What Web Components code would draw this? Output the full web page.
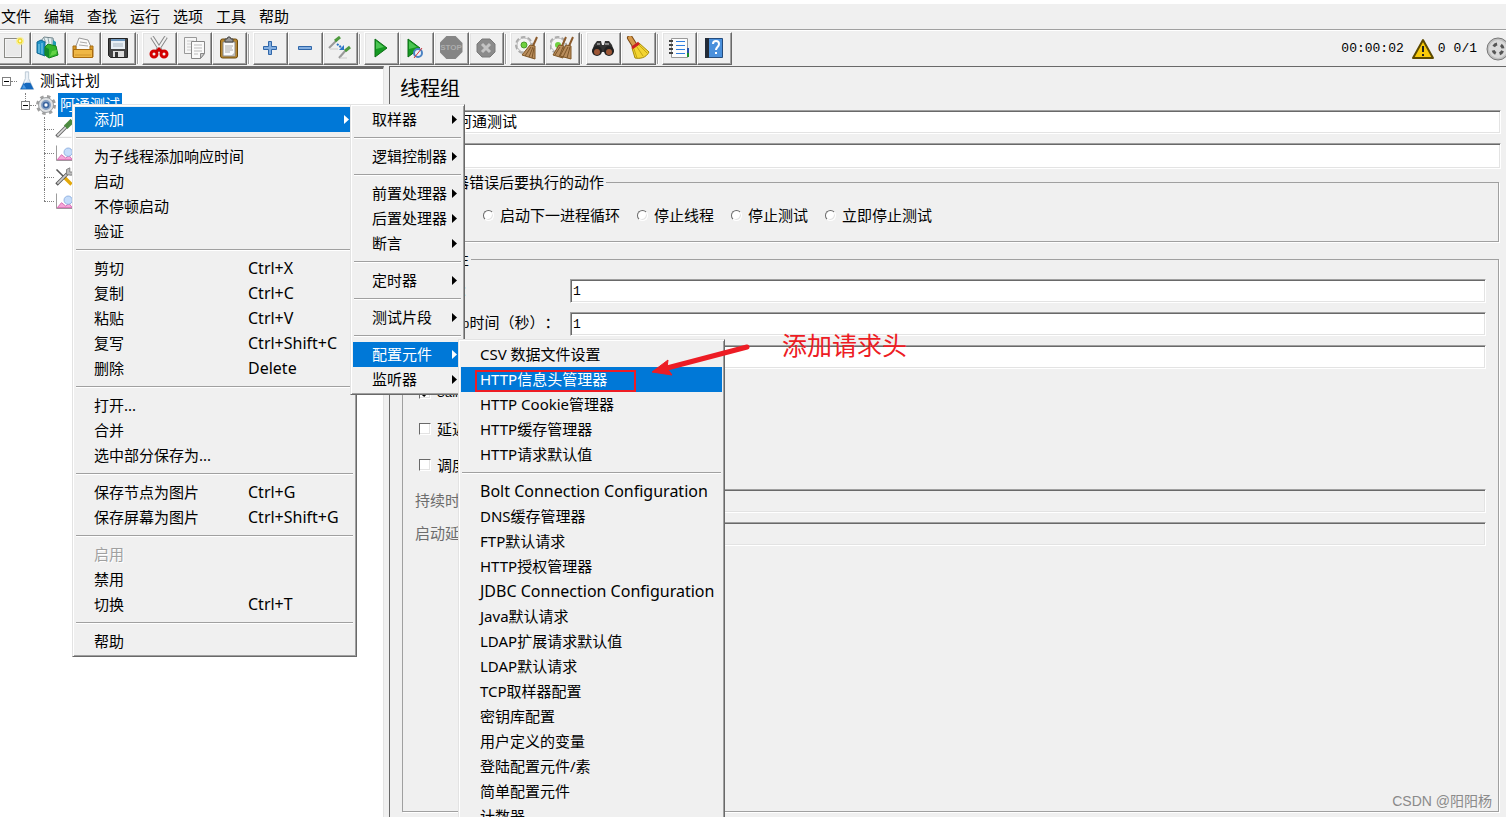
<!DOCTYPE html>
<html lang="zh-CN">
<head>
<meta charset="utf-8">
<title>线程组</title>
<style>
  html, body { height: 100%; }
  body {
    margin: 0; overflow: hidden; background: #f0f0f0; color: #000;
    font: 15px/20px "Noto Sans", "Noto Sans CJK SC", sans-serif;
    text-spacing-trim: space-all;
    --face: #f0f0f0; --light: #e3e3e3; --shade: #a0a0a0; --dark: #696969; --select: #0078d7;
    --form-font: "Noto Sans CJK SC", sans-serif; --mono: "Liberation Mono", monospace;
  }
</style>
</head>
<body>
<jm-app></jm-app>
<script>
const ICONS = {
  blank: `<rect x="3.500" y="2.500" width="17" height="19" fill="#f4f4f4" stroke="#8a8a86"/><rect x="5" y="4" width="14" height="16" fill="#e9e9e9"/><circle cx="19" cy="5" r="4" fill="#fbf08a" opacity=".8"/><circle cx="19" cy="5" r="2" fill="#fff6b8" stroke="#edd400"/>`,
  books: `<path d="M5 5l3-4 9 1 1 7-10 2z" fill="#e4eef0" stroke="#70848a"/><path d="M8 2l2 5M12 2l1 5M16 2l0 6" stroke="#8da3aa"/><path d="M1 6l4-2 4 2v14l-8-3z" fill="#1e93c7" stroke="#0f6591"/><path d="M3 8v9M6 7v11" stroke="#8fd2ee"/><path d="M17 4l3 2v8l-4 2z" fill="#1e9bb0"/><path d="M9 11l3-3 8 2 2 9-9 3-4-3z" fill="#35b52b" stroke="#16801b"/><path d="M9 11l4 2v9l-4-3z" fill="#128a2c"/><path d="M14 20l2-5 5-1-1 4z" fill="#62d446"/>`,
  open: `<path d="M5 10l3-8 9 2 3 7v5H5z" fill="#fafafa" stroke="#999"/><path d="M9 6l7 1M8 9l9 1" stroke="#aaa"/><path d="M2 10h3v5h14v-5h3v11H2z" fill="#d99b28" stroke="#a96c10"/><path d="M2.500 13.500h19v8h-19z" fill="#efb745" stroke="#a96c10"/><path d="M4 19h16" stroke="#d0942b"/>`,
  save: `<path d="M2.500 2.500h19v19h-17l-2-2z" fill="#444" stroke="#222"/><path d="M5 3h14v10H5z" fill="#e8eff5"/><path d="M5 3h14v2H5z" fill="#6d96bd"/><path d="M7 8h10M7 10h10" stroke="#a9b6c2"/><rect x="7" y="15" width="11" height="6" fill="#ddd"/><rect x="9" y="16" width="3" height="5" fill="#333"/>`,
  cut: `<path d="M5 1l9 14M19 1l-9 14" stroke="#888" stroke-width="4"/><path d="M5 1l9 14M19 1l-9 14" stroke="#f2f2f2" stroke-width="2"/><ellipse cx="7" cy="18" rx="3" ry="3" fill="none" stroke="#d40000" stroke-width="3"/><ellipse cx="17" cy="18" rx="3" ry="3" fill="none" stroke="#d40000" stroke-width="3"/><path d="M9 16l3-3 3 3" stroke="#c00" stroke-width="3" fill="none"/>`,
  copy: `<path d="M2.500 1.500h12v16h-12z" fill="#f6f6f6" stroke="#999"/><path d="M5 5h7M5 8h7M5 11h7M5 14h7" stroke="#ccc"/><path d="M9.500 5.500h13v12l-4 5h-9z" fill="#fafafa" stroke="#888"/><path d="M12 9h8M12 12h8M12 15h8M12 18h4" stroke="#bbb"/><path d="M22.500 17.500l-4 5v-5z" fill="#ccc" stroke="#888"/>`,
  paste: `<rect x="3.500" y="3" width="17" height="19" rx="2" fill="#b88730" stroke="#6d4a0c"/><path d="M6 6h12v14H6z" fill="#fafafa" stroke="#888"/><path d="M8 10h8M8 12h7M8 14h8M8 16h5" stroke="#aaa"/><path d="M8 6V3h2l1-2h2l1 2h2v3z" fill="#999" stroke="#444"/><path d="M14 20l4-4v4z" fill="#bbb"/>`,
  plus: `<path d="M10.500 5.500h3v5h5v3h-5v5h-3v-5h-5v-3h5z" fill="#83aee0" stroke="#2f66a9"/>`,
  minus: `<path d="M5.500 10.500h13v3h-13z" fill="#83aee0" stroke="#2f66a9"/>`,
  toggle: `<path d="M1 12L9 4" stroke="#999" stroke-width="2"/><path d="M7 5l5-4" stroke="#4d9a3d" stroke-width="3"/><path d="M11 22l7-8" stroke="#999" stroke-width="2"/><path d="M17 15l5-4" stroke="#4d9a3d" stroke-width="3"/><path d="M2 13h8M12 22h7" stroke="#ccc"/><path d="M9 8l5 4" stroke="#2c75c8" stroke-width="2" stroke-dasharray="2 1"/><path d="M16 9v5h-5z" fill="#2c75c8"/>`,
  play: `<path d="M6 3l12 9-12 9z" fill="#159a22" stroke="#0a6d14"/><path d="M7 5l8 6-8 2z" fill="#4bc552"/>`,
  playnow: `<path d="M4 3l12 9-12 9z" fill="#159a22" stroke="#0a6d14"/><path d="M5 5l8 6-8 2z" fill="#4bc552"/><circle cx="14" cy="17" r="4" fill="#e9f2fb" stroke="#4b83c3" stroke-width="2"/><path d="M10 22l8-10" stroke="#d33" stroke-width="1"/>`,
  shutdown: `<path d="M8 3h8l5 5v8l-5 5H8l-5-5V8z" fill="#8b8b8b" stroke="#7b7b7b"/><path d="M8 8l8 8M16 8l-8 8" stroke="#c4c4c4" stroke-width="3"/>`,
  clear: `<circle cx="9" cy="9" r="7" fill="none" stroke="#aaa" stroke-width="4" stroke-dasharray="4 2"/><circle cx="9" cy="9" r="7" fill="#f4f4f4" stroke="#bbb"/><circle cx="9" cy="9" r="3" fill="#6fd13f" stroke="#4c9c2c"/><path d="M22 1l-4 9" stroke="#8b5a2b" stroke-width="2"/><path d="M15 9l5 1v13L7 19z" fill="#b98d5c" stroke="#805726"/><path d="M16 11l-6 9M18 11l-4 10M19 12l-2 10" stroke="#7a5428"/>`,
  clearall: `<circle cx="8" cy="9" r="7" fill="none" stroke="#aaa" stroke-width="4" stroke-dasharray="4 2"/><circle cx="8" cy="9" r="7" fill="#f4f4f4" stroke="#bbb"/><circle cx="8" cy="9" r="3" fill="#6fd13f"/><path d="M16 1l-4 9M23 1l-4 9" stroke="#8b5a2b" stroke-width="2"/><path d="M9 9l5 1-1 12-10-3z" fill="#b98d5c" stroke="#805726"/><path d="M16 9l5 1 0 13-11-3z" fill="#b98d5c" stroke="#805726"/><path d="M10 11l-5 8M13 11l-4 10M18 11l-5 10M20 11l-3 11" stroke="#7a5428"/>`,
  find: `<path d="M3 9l3-4h4l1 4h2l1-4h4l3 4 2 7H1z" fill="#333"/><circle cx="6" cy="15" r="5" fill="#222"/><circle cx="18" cy="15" r="5" fill="#222"/><circle cx="6" cy="16" r="3" fill="#9d5635"/><circle cx="18" cy="16" r="3" fill="#9d5635"/><path d="M6 8h3M14 8h4" stroke="#888" stroke-width="2"/>`,
  sweep: `<path d="M4 2l5 8" stroke="#7a4a15" stroke-width="6" stroke-linecap="round"/><path d="M4 2l5 8" stroke="#d6994b" stroke-width="4" stroke-linecap="round"/><path d="M6 12l7-5 10 9c-3 6-9 7-14 6z" fill="#f3d532" stroke="#a58a0a"/><path d="M8 13l3 9M11 11l6 9M13 9l8 8" stroke="#c4a413"/><path d="M6 12l7-5" stroke="#c22" stroke-width="3"/>`,
  list: `<path d="M4.500 2.500h16v19h-16z" fill="#fcfcfc" stroke="#999"/><path d="M9 5.500h9M9 9.500h9M9 13.500h9M9 17.500h9" stroke="#2f7ee0" stroke-width="1"/><path d="M2 5h4M2 9h4M2 13h4M2 17h4" stroke="#444" stroke-width="2"/><path d="M21 12v5" stroke="#2a52a5" stroke-width="2"/><path d="M21 17v4" stroke="#198f2d" stroke-width="2"/>`,
  help: `<path d="M3.500 2.500h17v19h-17z" fill="#4a90dc" stroke="#254c7d"/><path d="M3 2h4v20H3z" fill="#222b38"/><path d="M11 8c0-4 6-4 6 0 0 3-3 3-3 6M14 16v2" fill="none" stroke="#fff" stroke-width="2"/>`,
  warn: `<path d="M12 3L22 21H2z" fill="#f8ca0a" stroke="#5d4a00" stroke-width="2" stroke-linejoin="round"/><path d="M12 9v6M12 17v2" stroke="#222" stroke-width="2"/>`,
  ball: `<circle cx="12" cy="12" r="11" fill="#c0c0c0" stroke="#777"/><circle cx="12" cy="12" r="9" fill="#dadada"/><circle cx="12" cy="12" r="5" fill="none" stroke="#555" stroke-width="3" stroke-dasharray="4 4" stroke-dashoffset="6"/>`,
  flask: `<path d="M10 1h4v8l6 13H4L10 9z" fill="#dfe9f3" stroke="#b7c4d0"/><path d="M8 14h8l4 8H4z" fill="#1568bd"/><path d="M8 16l-2 5h5z" fill="#4b9be6"/><path d="M12 2v8l-3 5" stroke="#fff" fill="none"/>`,
  gear: `<circle cx="12" cy="12" r="10" fill="none" stroke="#a0a0a0" stroke-width="4" stroke-dasharray="4 4"/><circle cx="12" cy="12" r="9" fill="#dfe1e3" stroke="#909497"/><circle cx="12" cy="12" r="5" fill="#3b66a0" stroke="#8aa3c4" stroke-width="2"/><circle cx="12" cy="12" r="2" fill="#fff"/>`,
  dropper: `<path d="M3 21L15 9" stroke="#666" stroke-width="4"/><path d="M4 20L15 9" stroke="#ddd" stroke-width="2"/><path d="M14 10l8-8" stroke="#4d8b41" stroke-width="6"/><path d="M3 22h18" stroke="#ccc"/>`,
  graph: `<path d="M3 3v18h19" fill="none" stroke="#888"/><path d="M4 20l5-6 5 4 4-3 4 5z" fill="#f6a4d8" stroke="#d05da8"/><circle cx="17" cy="11" r="5" fill="#c5dcfa" stroke="#87a9dc"/>`,
  tools: `<path d="M3 3l9 9" stroke="#555" stroke-width="2"/><path d="M12 12l9 9" stroke="#e3a80a" stroke-width="4"/><path d="M3 21L16 8" stroke="#555" stroke-width="4"/><path d="M4 20L16 8" stroke="#ccc" stroke-width="2"/><path d="M15 9V3l4-2v5h4l-2 4z" fill="#bbb" stroke="#777"/>`
};
const define = (name, html) => customElements.define(name, class extends HTMLElement {
  constructor() { super(); this.attachShadow({ mode: "open" }); }
  connectedCallback() {
    if (this.shadowRoot.childNodes.length) return;
    const t = document.createElement("template");
    t.innerHTML = typeof html === "function" ? html(this) : html;
    this.shadowRoot.append(t.content.cloneNode(true));
  }
});

define("jm-icon", el => `<style>:host{display:block;flex:none;width:24px;height:24px}svg{display:block;width:100%;height:100%}</style>
  <svg viewBox="0 0 24 24" fill="none" aria-hidden="true">${ICONS[el.getAttribute("name")]}</svg>`);

define("jm-tool", el => `<style>
  :host{display:block;flex:none}
  button{display:flex;align-items:center;justify-content:center;width:35px;height:33px;padding:0 1px 2px 0;margin:0;background:var(--face);
    border:1px solid;border-color:#fff var(--dark) var(--dark) #fff;box-shadow:inset -1px -1px var(--shade),inset 1px 1px var(--light)}
  .stop{display:flex;align-items:center;justify-content:center;width:23px;height:23px;background:#858585;color:#adadad;
    font:bold 8px "Liberation Sans",sans-serif;clip-path:polygon(30% 0,70% 0,100% 30%,100% 70%,70% 100%,30% 100%,0 70%,0 30%)}
  </style><button type="button" aria-label="${el.getAttribute("label")}">${el.getAttribute("name") === "stop" ? '<span class="stop">STOP</span>' : `<jm-icon name="${el.getAttribute("name")}"></jm-icon>`}</button>`);

define("jm-toolgroup", `<style>:host{display:flex;flex:none}:host(:not([first]))::before{content:"";width:1px;margin:2px 3px 1px 1px;border-left:1px solid var(--shade);background:#fff}</style><slot></slot>`);

define("jm-toolbar", () => {
  const groups = [
    ["blank:新建", "books:模板", "open:打开", "save:保存"], ["cut:剪切", "copy:复制", "paste:粘贴"],
    ["plus:展开", "minus:收起", "toggle:切换"], ["play:启动", "playnow:不停顿启动", "stop:停止", "shutdown:关闭"],
    ["clear:清除", "clearall:清除全部"], ["find:查找", "sweep:重置查找"], ["list:函数助手", "help:帮助"]];
  return `<style>
    :host{display:flex;align-items:center;height:33px;padding:1px 0;border-top:1px solid #fff;overflow:hidden}
    .tools{display:flex;margin-left:-4px;flex:1}
    .status{display:flex;align-items:center;flex:none;font:13px/20px var(--mono);margin-right:-4px}
    .time{margin-right:7px}.errors{margin:0 8px 0 3px}.threads{margin-right:9px}
    </style><div class="tools" role="toolbar">${groups.map((g, i) => `<jm-toolgroup ${i ? "" : "first"}>${g.map(x => { const [n, l] = x.split(":"); return `<jm-tool name="${n}" label="${l}"></jm-tool>`; }).join("")}</jm-toolgroup>`).join("")}</div>
    <div class="status"><span class="time">00:00:02</span><jm-icon name="warn"></jm-icon><span class="errors">0</span><span class="threads">0/1</span><jm-icon name="ball"></jm-icon></div>`;
});

define("jm-menubar", `<style>:host{display:block;border-top:4px solid #fff;border-bottom:1px solid var(--shade)}
  nav{display:flex;gap:13px;height:25px;align-items:center;padding-left:1px}
  button{font:inherit;color:inherit;background:none;border:0;padding:0 0 2px;margin:0}</style>
  <nav>${["文件", "编辑", "查找", "运行", "选项", "工具", "帮助"].map(t => `<button type="button">${t}</button>`).join("")}</nav>`);

define("jm-node", el => {
  const level = +el.getAttribute("level"), open = el.hasAttribute("open");
  return `<style>
    :host{display:flex;align-items:center;height:24px;position:relative;padding-left:${[2, 21, 44][level]}px;font-family:var(--form-font)}
    .box{width:7px;height:7px;border:1px solid #808080;background:linear-gradient(#000,#000) center/5px 1px no-repeat #fff;flex:none}
    .dots{width:${level === 2 ? 10 : 6}px;border-top:1px dotted #808080;flex:none}
    .rail{position:absolute;left:${level === 1 ? 25 : 44}px;top:0;height:${level === 1 ? 8 : el.hasAttribute("last") ? 12 : 24}px;border-left:1px dotted #808080}
    jm-icon{width:20px;height:20px}
    .name{line-height:22px;padding:0 2px 2px;margin-left:${level === 1 ? 2 : 1}px}
    :host([selected]) .name{background:var(--select);color:#fff}
    </style>${level ? '<span class="rail"></span>' : ""}${open ? '<span class="box"></span>' : ""}<span class="dots"></span><jm-icon name="${el.getAttribute("icon")}"></jm-icon><span class="name"><slot></slot></span>`;
});

define("jm-tree", `<style>:host{display:block;flex:none;width:384px;box-sizing:border-box;background:#fff;border-top:3px solid var(--dark);border-right:1px solid var(--light)}</style>
  <jm-node level="0" icon="flask" open>测试计划</jm-node><jm-node level="1" icon="gear" open selected>阿通测试</jm-node>
  <jm-node level="2" icon="dropper"></jm-node><jm-node level="2" icon="graph"></jm-node><jm-node level="2" icon="tools"></jm-node><jm-node level="2" icon="graph" last></jm-node>`);

define("jm-field", el => {
  const off = el.hasAttribute("off");
  return `<style>
    :host{display:flex;align-items:center;height:24px}
    :host([tall]){height:26px}
    label{flex:none;width:155px;padding-bottom:2px;white-space:nowrap;color:${off ? "#6d6d6d" : "inherit"}}
    input{flex:1;min-width:0;align-self:stretch;box-sizing:border-box;margin:0;padding:0 2px ${el.hasAttribute("wide") ? 4 : 0}px;border-radius:0;outline:0;
      font:${el.hasAttribute("wide") ? "15px var(--form-font)" : "13px var(--mono)"};color:#000;background:${off ? "var(--face)" : "#fff"};
      border:1px solid;border-color:var(--shade) #fff #fff var(--shade);box-shadow:inset 1px 1px var(--dark),inset -1px -1px var(--light)}
    </style>${el.hasAttribute("wide") ? "" : '<label for="i"><slot></slot></label>'}<input id="i" type="text" aria-label="${el.getAttribute("label")}" value="${el.getAttribute("value") || ""}" ${off ? "disabled" : ""}>`;
});

define("jm-choice", el => `<style>
  :host{display:block}
  label{display:flex;align-items:center;height:24px;gap:6px;white-space:nowrap}
  input{appearance:none;flex:none;box-sizing:border-box;margin:0;width:12px;height:12px;background:#fff;border:1px solid;
    border-color:var(--dark) #fff #fff var(--dark);box-shadow:inset -1px -1px var(--light)}
  input[type=radio]{border-radius:50%;width:11px;height:11px}
  input:checked::after{content:"";display:block;width:8px;height:8px;margin:1px;background:#000;clip-path:polygon(0 30%,40% 65%,100% 0,100% 35%,40% 100%,0 65%)}
  :host([mono]) label{font:13px var(--mono)}
  </style><label><input type="${el.getAttribute("type")}" name="action" ${el.hasAttribute("checked") ? "checked" : ""}><span><slot></slot></span></label>`);

define("jm-group", `<style>
  :host{display:flex;flex-direction:column}
  fieldset{flex:1;min-width:0;margin:0;padding:0 12px;border:1px solid var(--shade);box-shadow:1px 1px #fff}
  legend{padding:0 2px 0 0;margin-left:-6px;height:20px}
  </style><fieldset><legend><slot name="title"></slot></legend><slot></slot></fieldset>`);

define("jm-panel", `<style>
  :host{display:flex;flex-direction:column;flex:1;min-width:0;box-sizing:border-box;margin-left:5px;padding:7px 5px 5px 10px;
    border:1px solid var(--dark);border-width:1px 0 0 1px;font-family:var(--form-font)}
  h1{font:20px/28px var(--form-font);margin:0 0 8px}
  .head{display:flex;flex-direction:column;gap:9px;margin-left:54px}
  jm-group{margin:3px 2px 0}
  jm-group.props{flex:1;margin-top:7px}
  .radios{display:flex;gap:17px;padding:11px 0 14px 68px}
  .rows{display:flex;flex-direction:column;gap:9px;padding-top:10px}
  .checks{display:flex;flex-direction:column;gap:12px;padding:12px 0 12px 4px}
  .off{display:flex;flex-direction:column;gap:9px}
  .latin{font:13px/20px var(--mono)}
  </style>
  <h1>线程组</h1>
  <div class="head"><jm-field wide label="名称" value="阿通测试"></jm-field><jm-field wide tall label="注释"></jm-field></div>
  <jm-group><span slot="title">在取样器错误后要执行的动作</span>
    <div class="radios"><jm-choice type="radio">启动下一进程循环</jm-choice><jm-choice type="radio">停止线程</jm-choice><jm-choice type="radio">停止测试</jm-choice><jm-choice type="radio">立即停止测试</jm-choice></div>
  </jm-group>
  <jm-group class="props"><span slot="title">线程属性</span>
    <div class="rows"><jm-field label="线程数" value="1">线程数：</jm-field><jm-field label="时间（秒）" value="1"><span class="latin">Ramp-Up</span>时间（秒）：</jm-field><jm-field label="循环次数"></jm-field></div>
    <div class="checks"><jm-choice type="checkbox" mono checked>Same</jm-choice><jm-choice type="checkbox">延迟</jm-choice><jm-choice type="checkbox">调度</jm-choice></div>
    <div class="off"><jm-field off label="持续时间">持续时</jm-field><jm-field off label="启动延迟">启动延</jm-field></div>
  </jm-group>`);

define("jm-menu", `<style>
  :host{display:block;position:absolute;z-index:2;box-sizing:border-box;padding:2px;background:var(--face);color:#000;
    border:1px solid;border-color:var(--light) var(--dark) var(--dark) var(--light);
    box-shadow:inset 1px 1px #fff,inset -1px -1px var(--shade)}
  :host([slot=submenu]){left:calc(100% - 4px);top:-3px}
  </style><div role="menu"><slot></slot></div>`);

define("jm-sep", `<style>:host{display:block;height:12px;box-sizing:border-box;padding:5px 1px}hr{margin:0;border:0;border-top:1px solid var(--shade);border-bottom:1px solid #fff}</style><hr>`);

define("jm-item", el => `<style>
  :host{display:block;position:relative;height:25px}
  button{display:flex;align-items:center;width:100%;height:25px;box-sizing:border-box;margin:0;border:0;padding:0 5px 0 19px;
    background:none;color:inherit;font:inherit;text-align:left;white-space:nowrap}
  .text{flex:1;padding-bottom:2px}
  .key{width:101px;padding-bottom:2px}
  .key,.latin{font-size:16px}
  .arrow{width:5px;height:9px;background:currentColor;clip-path:polygon(0 0,100% 50%,0 100%)}
  :host([active]) button{background:var(--select);color:#fff}
  :host([off]) button{color:var(--shade);text-shadow:1px 1px #fff}
  .mark{position:absolute;left:14px;top:3px;width:161px;height:22px;box-sizing:border-box;border:2px solid #ed1c24}
  </style><button type="button" role="menuitem" ${el.hasAttribute("off") ? "disabled" : ""}><span class="text ${/^[\x20-\x7e]+$/.test(el.getAttribute("text")) ? "latin" : ""}">${el.getAttribute("text")}</span>${el.hasAttribute("key") ? `<span class="key">${el.getAttribute("key")}</span>` : ""}${el.hasAttribute("sub") ? '<span class="arrow"></span>' : ""}</button>${el.hasAttribute("marked") ? '<span class="mark"></span>' : ""}<slot name="submenu"></slot>`);

define("jm-note", `<style>:host{display:block;position:absolute;z-index:5;left:650px;top:331px;pointer-events:none}
  div{display:flex;gap:30px}svg{display:block;width:102px;height:50px}
  span{font:25px/26px var(--form-font);color:#ed1c24;white-space:nowrap}</style>
  <div><svg viewBox="0 0 102 50" aria-hidden="true"><path d="M97 16L17 37" stroke="#ed1c24" stroke-width="5" stroke-linecap="round"/><path d="M2 41L18 29L17 37L22 44Z" fill="#ed1c24" stroke="#ed1c24" stroke-linejoin="round"/></svg><span>添加请求头</span></div>`);

const items = list => list.map(t => t === "-" ? "<jm-sep></jm-sep>" : Array.isArray(t) ? `<jm-item text="${t[0]}" ${t[1]}>${t[2] || ""}</jm-item>` : `<jm-item text="${t}"></jm-item>`).join("");
const config = items(["CSV 数据文件设置", ["HTTP信息头管理器", "active marked"], "HTTP Cookie管理器", "HTTP缓存管理器", "HTTP请求默认值", "-",
  "Bolt Connection Configuration", "DNS缓存管理器", "FTP默认请求", "HTTP授权管理器", "JDBC Connection Configuration", "Java默认请求",
  "LDAP扩展请求默认值", "LDAP默认请求", "TCP取样器配置", "密钥库配置", "用户定义的变量", "登陆配置元件/素", "简单配置元件", "计数器"]);
const add = items([["取样器", "sub"], "-", ["逻辑控制器", "sub"], "-", ["前置处理器", "sub"], ["后置处理器", "sub"], ["断言", "sub"], "-",
  ["定时器", "sub"], "-", ["测试片段", "sub"], "-", ["配置元件", "sub active", `<jm-menu slot="submenu" style="width:267px">${config}</jm-menu>`], ["监听器", "sub"]]);
const context = items([["添加", "sub active", `<jm-menu slot="submenu" style="width:115px">${add}</jm-menu>`], "-",
  "为子线程添加响应时间", "启动", "不停顿启动", "验证", "-",
  ["剪切", 'key="Ctrl+X"'], ["复制", 'key="Ctrl+C"'], ["粘贴", 'key="Ctrl+V"'], ["复写", 'key="Ctrl+Shift+C"'], ["删除", 'key="Delete"'], "-",
  "打开...", "合并", "选中部分保存为...", "-", ["保存节点为图片", 'key="Ctrl+G"'], ["保存屏幕为图片", 'key="Ctrl+Shift+G"'], "-",
  ["启用", "off"], "禁用", ["切换", 'key="Ctrl+T"'], "-", "帮助"]);

define("jm-app", `<style>
  :host{display:flex;flex-direction:column;height:100vh;position:relative;overflow:hidden}
  main{display:flex;flex:1;min-height:0}
  .context{left:72px;top:104px;width:285px}
  .credit{position:absolute;right:14px;bottom:6px;font:14px/20px "Liberation Sans","Noto Sans CJK SC",sans-serif;color:#8a8a8a}
  </style>
  <jm-menubar></jm-menubar><jm-toolbar></jm-toolbar>
  <main><jm-tree></jm-tree><jm-panel></jm-panel></main>
  <jm-menu class="context">${context}</jm-menu>
  <jm-note></jm-note>
  <span class="credit">CSDN @阳阳杨</span>`);
</script>
</body>
</html>
